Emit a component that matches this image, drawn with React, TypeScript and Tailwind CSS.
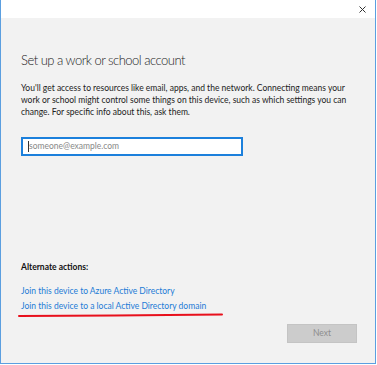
import React from 'react';

export default function App() {
  return (
    <div className="w-[377px] h-[365px] bg-white">
      <div
        className="w-[376px] h-[364px] border-x border-b border-[#5b9fe0] bg-[#f2f2f2] flex flex-col"
        style={{ fontFamily: 'Lato, "Open Sans", sans-serif' }}
      >
        {/* title bar */}
        <div className="h-[18px] bg-white flex justify-end items-center pr-[9px]">
          <svg width="7" height="7" viewBox="0 0 7 7" className="text-[#333]">
            <path d="M0.5 0.5L6.5 6.5M6.5 0.5L0.5 6.5" stroke="currentColor" strokeWidth="1" />
          </svg>
        </div>

        <div className="flex-1 flex flex-col pl-[20px] pr-[18px]">
          <h1 className="mt-[32px] text-[13px] tracking-[-0.5px] font-light leading-[20px] text-[#222]">
            Set up a work or school account
          </h1>

          <p className="mt-[12px] text-[8.5px] leading-[12px] text-[#222]">
            You'll get access to resources like email, apps, and the network. Connecting means your
            work or school might control some things on this device, such as which settings you can
            change. For specific info about this, ask them.
          </p>

          <div className="mt-[19px] w-[222px] h-[19px] border-2 border-[#1c80dc] bg-white flex items-center pl-[5px]">
            <span className="w-px h-[11px] bg-[#333]"></span>
            <span className="text-[8.5px] text-[#888] leading-none">someone@example.com</span>
          </div>

          <div className="flex-1"></div>

          <div className="text-[8.5px] font-bold text-[#111] leading-[12px]">Alternate actions:</div>

          <div className="mt-[11px] text-[8.5px] leading-[15px] text-[#1c7bd6]">
            <div>Join this device to Azure Active Directory</div>
            <div className="relative">
              Join this device to a local Active Directory domain
              <svg
                className="absolute left-[-3px] top-[14px]"
                width="206"
                height="5"
                viewBox="0 0 206 5"
              >
                <path d="M1 3 C 60 2.5, 150 2.2, 204 1.6" stroke="#e8101c" strokeWidth="2" fill="none" strokeLinecap="round" />
              </svg>
            </div>
          </div>

          <div className="mt-[10px] flex justify-end">
            <button className="w-[70px] h-[19px] bg-[#cccccc] border border-[#c4c4c4] text-[8.5px] text-[#8e8e8e]">
              Next
            </button>
          </div>

          <div className="h-[20px]"></div>
        </div>
      </div>
    </div>
  );
}
